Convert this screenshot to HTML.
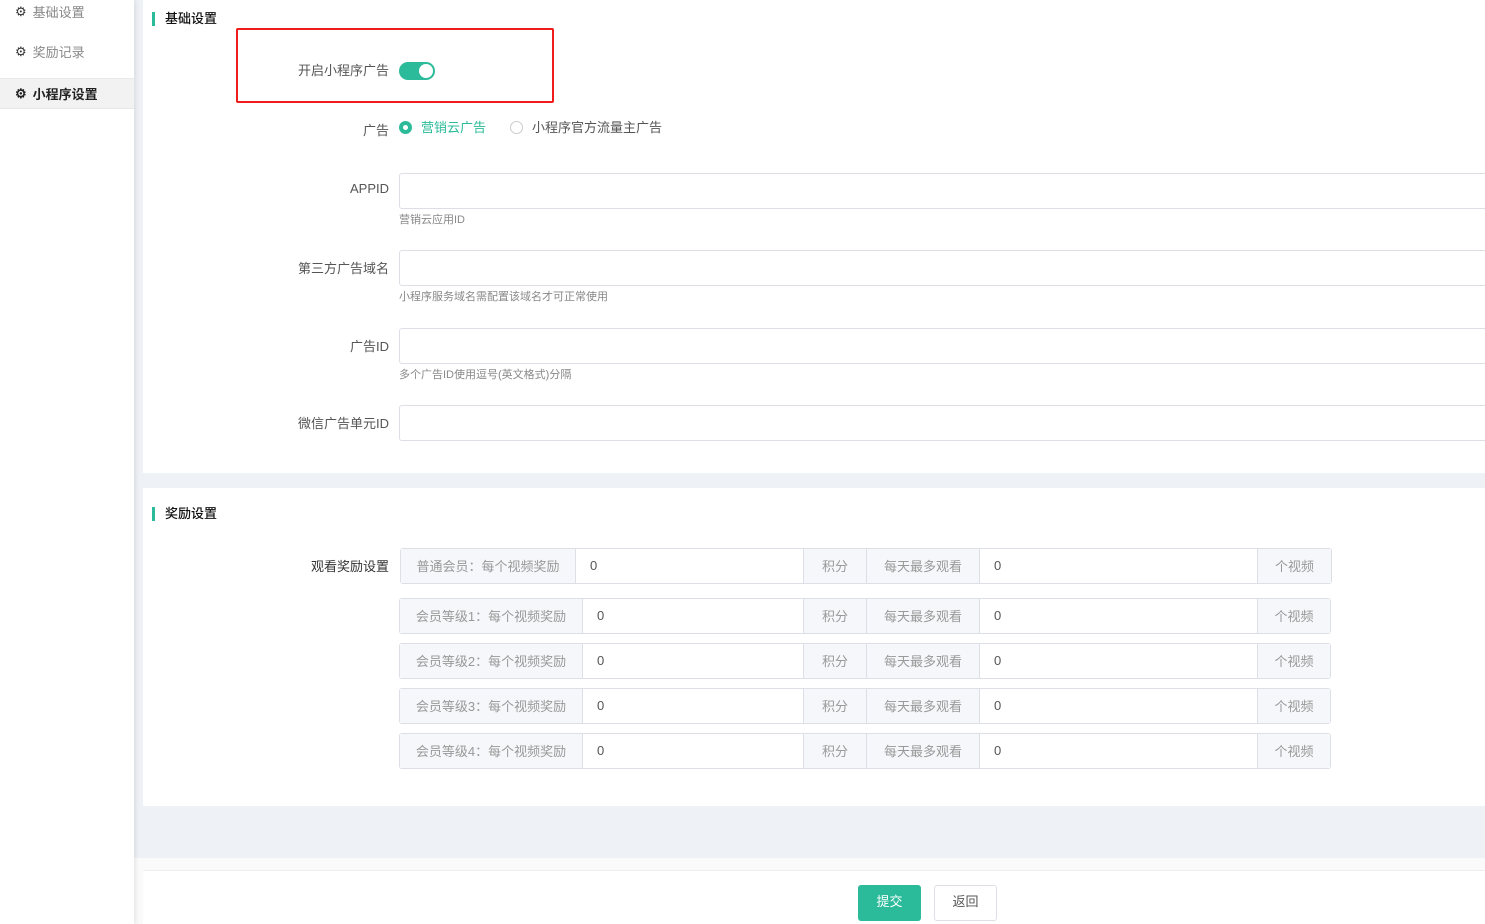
<!DOCTYPE html><html><head><meta charset="utf-8"><style>
*{box-sizing:border-box;margin:0;padding:0}
body{width:1485px;height:924px;position:relative;background:#eef1f5;font-family:"Liberation Sans","Noto Sans CJK SC",sans-serif;font-size:13px;color:#555;overflow:hidden}
.a{position:absolute}
.side{left:0;top:0;width:134px;height:924px;background:#fff;box-shadow:2px 0 4px rgba(0,0,0,.08);z-index:2}
.nav{position:absolute;left:15px;font-size:13px;color:#888;display:flex;align-items:center;gap:6px}
.panel{background:#fff}
.title{font-size:13px;color:#111;border-left:3px solid #2bbb9a;padding-left:10px;line-height:14px;font-weight:500}
.lbl{position:absolute;text-align:right;width:200px;color:#555;font-size:13px}
.inp{position:absolute;left:399px;width:1100px;height:36px;border:1px solid #dcdfe6;border-radius:3px;background:#fff}
.hint{position:absolute;left:399px;font-size:11px;color:#888}
.row{position:absolute;left:400px;height:36px;width:932px;border:1px solid #dcdfe6;border-radius:3px;display:flex;background:#fff;font-size:13px}
.row div{display:flex;align-items:center;height:100%;padding-bottom:2px}
.ad{background:#f5f7fa;color:#999;justify-content:center}
.in{padding-left:14px;color:#555}
</style></head><body>
<div class="a side">
<div class="nav" style="top:2px"><span style="color:#333">⚙</span>基础设置</div>
<div class="nav" style="top:42px"><span style="color:#333">⚙</span>奖励记录</div>
<div class="a" style="left:0;top:78px;width:134px;height:31px;background:#f2f2f2;border-top:1px solid #e8e8e8;border-bottom:1px solid #e8e8e8"></div>
<div class="nav" style="top:84px;color:#222;font-weight:bold"><span>⚙</span>小程序设置</div>
</div>
<div class="a panel" style="left:143px;top:0;width:1342px;height:473px"></div>
<div class="a title" style="left:152px;top:12px">基础设置</div>
<div class="a" style="left:236px;top:28px;width:318px;height:75px;border:2px solid #f01c1c;border-radius:2px"></div>
<div class="lbl" style="left:189px;top:60px">开启小程序广告</div>
<div class="a" style="left:399px;top:62px;width:36px;height:18px;border-radius:9px;background:#2bbb9a"><div class="a" style="right:2px;top:2px;width:14px;height:14px;border-radius:50%;background:#fff"></div></div>
<div class="lbl" style="left:189px;top:120px">广告</div>
<div class="a" style="left:399px;top:121px;width:13px;height:13px;border-radius:50%;background:#2bbb9a"><div class="a" style="left:4px;top:4px;width:5px;height:5px;border-radius:50%;background:#fff"></div></div>
<div class="a" style="left:421px;top:117px;color:#2bbb9a">营销云广告</div>
<div class="a" style="left:510px;top:121px;width:13px;height:13px;border-radius:50%;border:1px solid #ccc"></div>
<div class="a" style="left:532px;top:117px;color:#555">小程序官方流量主广告</div>
<div class="lbl" style="left:189px;top:181px">APPID</div><div class="inp" style="top:173px"></div><div class="hint" style="top:211px">营销云应用ID</div>
<div class="lbl" style="left:189px;top:258px">第三方广告域名</div><div class="inp" style="top:250px"></div><div class="hint" style="top:288px">小程序服务域名需配置该域名才可正常使用</div>
<div class="lbl" style="left:189px;top:336px">广告ID</div><div class="inp" style="top:328px"></div><div class="hint" style="top:366px">多个广告ID使用逗号(英文格式)分隔</div>
<div class="lbl" style="left:189px;top:413px">微信广告单元ID</div><div class="inp" style="top:405px"></div>
<div class="a panel" style="left:143px;top:488px;width:1342px;height:318px"></div>
<div class="a title" style="left:152px;top:507px">奖励设置</div>
<div class="lbl" style="left:189px;top:556px;color:#333">观看奖励设置</div>
<div class="row" style="top:548px"><div class="ad" style="width:175px;border-right:1px solid #dcdfe6">普通会员：每个视频奖励</div><div class="in" style="width:227px">0</div><div class="ad" style="width:64px;border-left:1px solid #dcdfe6;border-right:1px solid #dcdfe6">积分</div><div class="ad" style="width:113px;border-right:1px solid #dcdfe6">每天最多观看</div><div class="in" style="width:277px">0</div><div class="ad" style="flex:1;border-left:1px solid #dcdfe6">个视频</div></div>
<div class="row" style="top:598px;left:399px"><div class="ad" style="width:183px;border-right:1px solid #dcdfe6">会员等级1：每个视频奖励</div><div class="in" style="width:220px">0</div><div class="ad" style="width:64px;border-left:1px solid #dcdfe6;border-right:1px solid #dcdfe6">积分</div><div class="ad" style="width:113px;border-right:1px solid #dcdfe6">每天最多观看</div><div class="in" style="width:277px">0</div><div class="ad" style="flex:1;border-left:1px solid #dcdfe6">个视频</div></div>
<div class="row" style="top:643px;left:399px"><div class="ad" style="width:183px;border-right:1px solid #dcdfe6">会员等级2：每个视频奖励</div><div class="in" style="width:220px">0</div><div class="ad" style="width:64px;border-left:1px solid #dcdfe6;border-right:1px solid #dcdfe6">积分</div><div class="ad" style="width:113px;border-right:1px solid #dcdfe6">每天最多观看</div><div class="in" style="width:277px">0</div><div class="ad" style="flex:1;border-left:1px solid #dcdfe6">个视频</div></div>
<div class="row" style="top:688px;left:399px"><div class="ad" style="width:183px;border-right:1px solid #dcdfe6">会员等级3：每个视频奖励</div><div class="in" style="width:220px">0</div><div class="ad" style="width:64px;border-left:1px solid #dcdfe6;border-right:1px solid #dcdfe6">积分</div><div class="ad" style="width:113px;border-right:1px solid #dcdfe6">每天最多观看</div><div class="in" style="width:277px">0</div><div class="ad" style="flex:1;border-left:1px solid #dcdfe6">个视频</div></div>
<div class="row" style="top:733px;left:399px"><div class="ad" style="width:183px;border-right:1px solid #dcdfe6">会员等级4：每个视频奖励</div><div class="in" style="width:220px">0</div><div class="ad" style="width:64px;border-left:1px solid #dcdfe6;border-right:1px solid #dcdfe6">积分</div><div class="ad" style="width:113px;border-right:1px solid #dcdfe6">每天最多观看</div><div class="in" style="width:277px">0</div><div class="ad" style="flex:1;border-left:1px solid #dcdfe6">个视频</div></div>
<div class="a" style="left:134px;top:858px;width:1351px;height:66px;background:#fafafa"></div>
<div class="a" style="left:143px;top:870px;width:1342px;height:54px;background:#fff;border-top:1px solid #eee"></div>
<div class="a" style="left:858px;top:885px;width:63px;height:36px;background:#2bbb9a;border-radius:3px;color:#fff;text-align:center;line-height:34px">提交</div>
<div class="a" style="left:934px;top:885px;width:63px;height:36px;background:#fff;border:1px solid #dcdfe6;border-radius:3px;color:#555;text-align:center;line-height:32px">返回</div>
</body></html>
